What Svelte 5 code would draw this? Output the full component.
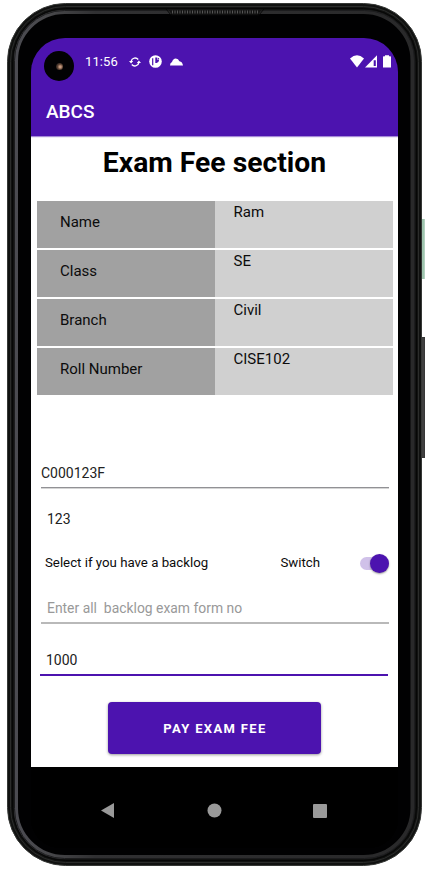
<script>
  const details = [
    { label: 'Name', value: 'Ram' },
    { label: 'Class', value: 'SE' },
    { label: 'Branch', value: 'Civil' },
    { label: 'Roll Number', value: 'CISE102' }
  ];
</script>

<div class="stage">
  <i class="side power"></i>
  <i class="side volume"></i>
  <div class="phone">
    <svg class="bezel" width="415" height="863" viewBox="7 3 415 863" fill="none" aria-hidden="true">
      <defs>
        <linearGradient id="rim" x1="0" x2="1" y1="0" y2="0">
          <stop offset="0" stop-color="#4b4b51" />
          <stop offset="0.08" stop-color="#48484b" />
          <stop offset="0.2" stop-color="#303032" />
          <stop offset="1" stop-color="#29292a" />
        </linearGradient>
      </defs>
      <rect x="7.5" y="3.5" width="414" height="862" rx="58" fill="#111211" stroke="#363836" />
      <rect x="10.5" y="6.5" width="408" height="856" rx="55" stroke="#2b2c2b" />
      <rect x="12.5" y="8.5" width="404" height="852" rx="53" stroke="#060606" />
      <rect x="16" y="12" width="396.5" height="845" rx="49" fill="#010102" stroke="url(#rim)" stroke-width="4" />
      <rect x="14.5" y="10.5" width="400" height="848" rx="50" stroke="#1c1c1e" />
      <path d="M168 9H262L258 15H172Z" fill="#141414" />
      <path d="M172 12H258" stroke="#555" stroke-width="3" stroke-dasharray="1 1.5" />
      <path d="M166 9L171 15H259L264 9" stroke="#080808" stroke-width="1" />
    </svg>
    <div class="screen">
      <header>
        <div class="status">
          <i class="camera"><b></b></i>
          <span class="clock">11:56</span>
          <svg class="sync" width="12" height="12" viewBox="0 0 12 12" fill="none" stroke="#fff" stroke-width="1.3">
            <path d="M2.2 5A4 4 0 0 1 9.2 3.5M9.8 7A4 4 0 0 1 2.8 8.5" />
            <path d="M0 5H4.2L2.1 7.6ZM7.8 7H12L9.9 4.4Z" fill="#fff" stroke="none" />
          </svg>
          <svg class="app" width="13" height="13" viewBox="0 0 13 13">
            <circle cx="6.5" cy="6.5" r="6.3" fill="#fff" />
            <path d="M3.7 3.2V10.3" fill="none" stroke="#4c13af" stroke-width="1.2" />
            <path d="M6.3 2.6H8.3V4.8H10.2Q10 7.3 7.6 8H6.3Z" fill="#4c13af" />
            <circle cx="9.4" cy="3.7" r=".7" fill="#4c13af" />
          </svg>
          <svg class="cloud" width="13" height="8" viewBox="0 0 13 8"><path d="M0 7.5Q0 4.8 2 4Q3 .8 5.8 .6Q8.4 .7 9.4 3.2Q12.5 3.8 13 7.5Z" fill="#fff" /></svg>
          <svg class="signals" width="42" height="13" viewBox="0 0 42 13" fill="#fff">
            <path d="M0 3.6Q7-3.2 14 3.6L7 12.4Z" />
            <path d="M15 12.5L27 .3V12.5Z" />
            <path d="M23.7 5.2H25.8V11H23.7Z" fill="#4c13af" />
            <path d="M33 2Q33 1.3 33.7 1.3H35V.3H39V1.3H40.3Q41 1.3 41 2V12.5H33Z" />
          </svg>
        </div>
        <div class="appbar">ABCS</div>
      </header>
      <main>
        <h1>Exam Fee section</h1>
        <div class="table">
          {#each details as row}
            <div class="row">
              <span class="label">{row.label}</span>
              <span class="value">{row.value}</span>
            </div>
          {/each}
        </div>
        <div class="field form-no">C000123F</div>
        <div class="plain">123</div>
        <div class="switch-row">
          <span>Select if you have a backlog</span>
          <span class="switch-label">Switch</span>
          <span class="track"><i class="thumb"></i></span>
        </div>
        <div class="field backlog">Enter all&nbsp; backlog exam form no</div>
        <div class="field amount">1000</div>
        <button>PAY EXAM FEE</button>
      </main>
      <nav>
        <svg width="367" height="81" viewBox="31 767 367 81" fill="#999">
          <path d="M101 810.5L114 803V818Z" />
          <circle cx="214.5" cy="810.5" r="7" />
          <rect x="313" y="804" width="14" height="14" rx="1" />
        </svg>
      </nav>
    </div>
  </div>
</div>

<style>
  :global(body) { margin: 0; background: #fff; }
  .stage { position: relative; box-sizing: border-box; width: 430px; height: 871px; padding: 3px 0 0 7px; overflow: hidden; background: #fff; font-family: Roboto, "Liberation Sans", sans-serif; }
  .side { position: absolute; left: 420px; width: 5px; box-sizing: border-box; }
  .power { top: 219px; height: 60px; background: #9fc4ae; border-right: 1px solid #b4d3c1; border-left: 2px solid #678273; }
  .volume { top: 337px; height: 121px; background: #404040; border: 1px solid #383838; }
  .phone { position: relative; box-sizing: border-box; width: 415px; height: 863px; padding: 35px 24px 18px; }
  .bezel { position: absolute; left: 0; top: 0; }
  .screen { position: relative; display: flex; flex-direction: column; width: 367px; height: 810px; background: #000; border-radius: 34px 34px 30px 30px; overflow: hidden; }
  header { position: relative; box-sizing: border-box; height: 98px; background: #4c13af; box-shadow: 0 1px 1px #4c13af80; color: #fff; flex: none; z-index: 1; }
  .status { display: flex; align-items: center; height: 47px; padding: 0 6px 0 13px; }
  .camera { display: grid; place-items: center; width: 30px; height: 30px; margin-top: 9px; border-radius: 50%; background: #020203; }
  .camera b { width: 7px; height: 7px; border-radius: 50%; background: radial-gradient(circle at 60% 55%, #c59a80 0 16%, #604635 45%, #211b1b 80%); }
  .clock { margin-left: 11px; width: 43.5px; font-size: 13px; line-height: 16px; letter-spacing: .1px; }
  .app { margin-left: 8px; }
  .cloud { margin-left: 8px; }
  .signals { margin-left: auto; }
  .appbar { padding: 15px 15px 0; font-size: 19px; font-weight: 500; line-height: 23px; }
  main { display: flex; flex-direction: column; height: 631px; flex: none; background: #fff; color: #0c0c0c; }
  h1 { margin: 9px 0 0; text-align: center; font-size: 28.3px; line-height: 36px; font-weight: 700; color: #000; }
  .table { display: flex; flex-direction: column; gap: 2px; margin: 20px 5px 0 6px; }
  .row { display: flex; height: 47px; font-size: 15px; line-height: 18px; }
  .row span { box-sizing: border-box; width: 178px; }
  .label { padding: 12px 0 0 23px; background: #a1a1a1; }
  .value { padding: 2px 0 0 18.5px; background: #d0d0d0; }
  .field { box-sizing: border-box; width: 348px; margin-left: 10px; font-size: 14px; line-height: 18px; color: #222; flex: none; }
  .form-no { height: 24px; margin-top: 69px; border-bottom: 1px solid #919195; box-shadow: 0 1px #d5d5d5; }
  .plain { margin: 22px 0 0 16px; font-size: 14px; line-height: 18px; color: #222; }
  .switch-row { display: flex; align-items: center; height: 20px; margin: 25px 9px 0 14px; font-size: 13.25px; line-height: 18px; }
  .switch-label { margin-left: auto; margin-right: 40px; }
  .track { position: relative; width: 29px; height: 13px; border-radius: 7px; background: #d0c1e9; }
  .thumb { position: absolute; right: 0; top: -3px; width: 19px; height: 19px; border-radius: 50%; background: #4c13af; box-shadow: 0 1px 2px #0006; }
  .backlog { height: 25px; margin-top: 26px; padding-left: 6px; border-bottom: 2px solid #b9b9b9; color: #999; font-size: 13.9px; }
  .amount { height: 25px; margin: 27px 0 0 9px; padding-left: 6px; border-bottom: 2px solid #4c13af; }
  button { align-self: center; width: 213px; height: 52px; margin: 26px 0 0; padding: 2px 0 0 1px; border: 0; border-radius: 4px; background: #4c13af; box-shadow: 0 1px 3px #0006; color: #fff; font: 700 13px/18px Roboto, "Liberation Sans", sans-serif; letter-spacing: 1.35px; flex: none; }
  nav { height: 81px; background: #000; }
  nav svg { display: block; }
</style>
